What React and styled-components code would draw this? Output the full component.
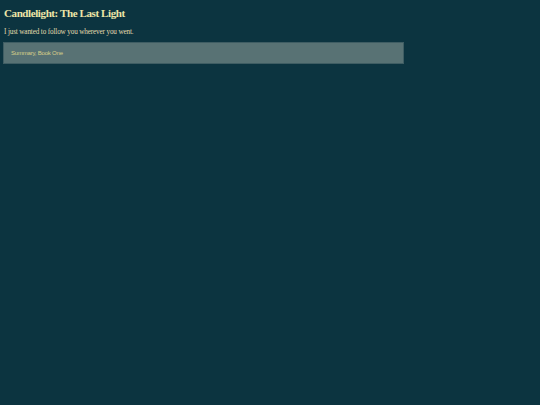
import React from "react";
import styled, { createGlobalStyle } from "styled-components";

const GlobalStyle = createGlobalStyle`
  html, body {
    margin: 0;
    padding: 0;
    background: #0c3440;
    min-height: 100%;
  }
  body {
    font-family: "Liberation Serif", "Times New Roman", serif;
  }
`;

const Page = styled.div`
  display: flex;
  flex-direction: column;
  padding: 6px 4px;
  width: 400px;
  min-height: 393px;
`;

const Title = styled.h1`
  margin: 0;
  font-size: 11px;
  line-height: 14px;
  font-weight: bold;
  letter-spacing: -0.4px;
  color: #ece6a8;
`;

const Lead = styled.p`
  margin: 8px 0 0 0;
  font-size: 7.2px;
  line-height: 9px;
  letter-spacing: -0.15px;
  color: #e4dcae;
`;

const Summary = styled.div`
  margin: 5px 0 0 -1px;
  padding: 7px 7px 6px;
  background: #587274;
  border: 1px solid #3f5d63;
  font-family: "Liberation Sans", Arial, sans-serif;
  font-size: 6px;
  line-height: 7px;
  letter-spacing: -0.2px;
  color: #d8d08a;
`;

export default function App() {
  return (
    <>
      <GlobalStyle />
      <Page>
        <Title>Candlelight: The Last Light</Title>
        <Lead>I just wanted to follow you wherever you went.</Lead>
        <Summary>Summary, Book One</Summary>
      </Page>
    </>
  );
}
